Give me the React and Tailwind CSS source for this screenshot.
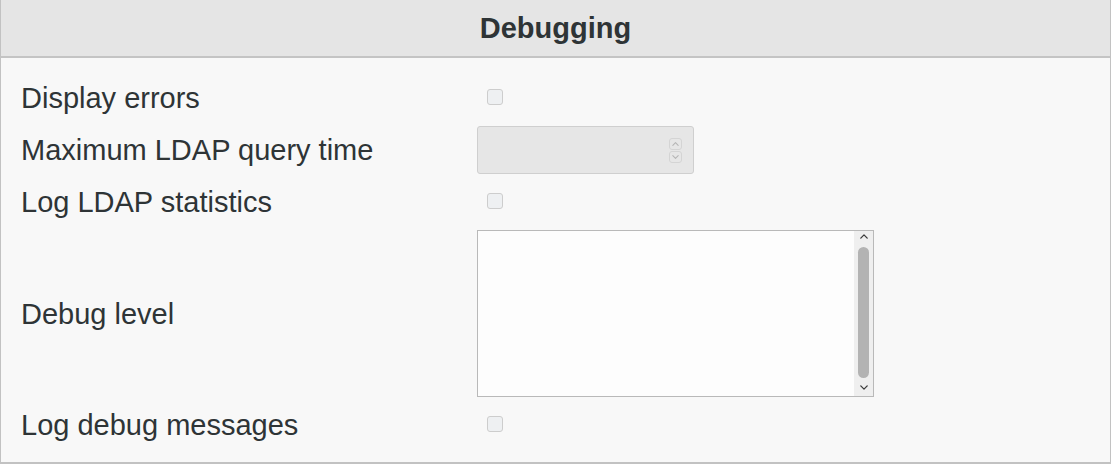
import React from "react";

const font = { fontFamily: '"Liberation Sans", Arial, sans-serif' };

function Check() {
  return (
    <div className="mb-[3px] ml-[10px] h-4 w-4 rounded-[3px] border border-[#cdcdcd] bg-[#eef0f2]" />
  );
}

function Chevron({ up, className }) {
  return (
    <svg viewBox="0 0 10 6" className={className} fill="none">
      <path
        d={up ? "M1 5 L5 1 L9 5" : "M1 1 L5 5 L9 1"}
        stroke="currentColor"
        strokeWidth="1.6"
        strokeLinecap="round"
        strokeLinejoin="round"
      />
    </svg>
  );
}

function SpinInput() {
  return (
    <div className="flex h-12 w-[217px] items-center justify-end rounded-[3px] border border-[#cfcfcf] bg-[#e6e6e6] pr-[11px]">
      <div className="flex flex-col gap-[1px]">
        <div className="flex h-[12px] w-[13px] items-center justify-center rounded-[3px] border border-[#d4d4d4] text-[#b5b5b5]">
          <Chevron up className="h-[4px] w-[7px]" />
        </div>
        <div className="flex h-[12px] w-[13px] items-center justify-center rounded-[3px] border border-[#d4d4d4] text-[#b5b5b5]">
          <Chevron className="h-[4px] w-[7px]" />
        </div>
      </div>
    </div>
  );
}

function ListBox() {
  return (
    <div className="flex h-[167px] w-[397px] border border-[#b9b9b9] bg-[#fdfdfd]">
      <div className="flex-1" />
      <div className="flex w-[19px] flex-col items-center bg-[#efefef] py-[3px]">
        <Chevron up className="h-[5px] w-[8px] text-[#3a3a3a]" />
        <div className="mt-[8px] w-[11px] flex-1 rounded-full bg-[#b3b3b3]" />
        <Chevron className="mt-[7px] mb-[3px] h-[5px] w-[8px] text-[#3a3a3a]" />
      </div>
    </div>
  );
}

const rows = [
  { label: "Display errors", field: <Check />, h: "h-12" },
  { label: "Maximum LDAP query time", field: <SpinInput />, h: "h-12" },
  { label: "Log LDAP statistics", field: <Check />, h: "h-12" },
  { label: "Debug level", field: <ListBox />, h: "h-[167px]" },
  { label: "Log debug messages", field: <Check />, h: "h-12" },
];

export default function App() {
  return (
    <div
      className="h-[464px] w-[1111px] border-x border-b-2 border-[#c2c2c2] bg-[#f8f8f8] text-[#2e3436]"
      style={font}
    >
      <div className="flex h-[58px] items-center justify-center border-b-2 border-[#c4c4c4] bg-[#e5e5e5] pt-[2px]">
        <h2 className="text-[29px] font-bold">Debugging</h2>
      </div>
      <div className="flex flex-col gap-1 pt-4">
        {rows.map((r) => (
          <div key={r.label} className={`flex items-center ${r.h}`}>
            <div className="w-[476px] pl-[20px] pt-[2px] text-[29px]">{r.label}</div>
            {r.field}
          </div>
        ))}
      </div>
    </div>
  );
}
